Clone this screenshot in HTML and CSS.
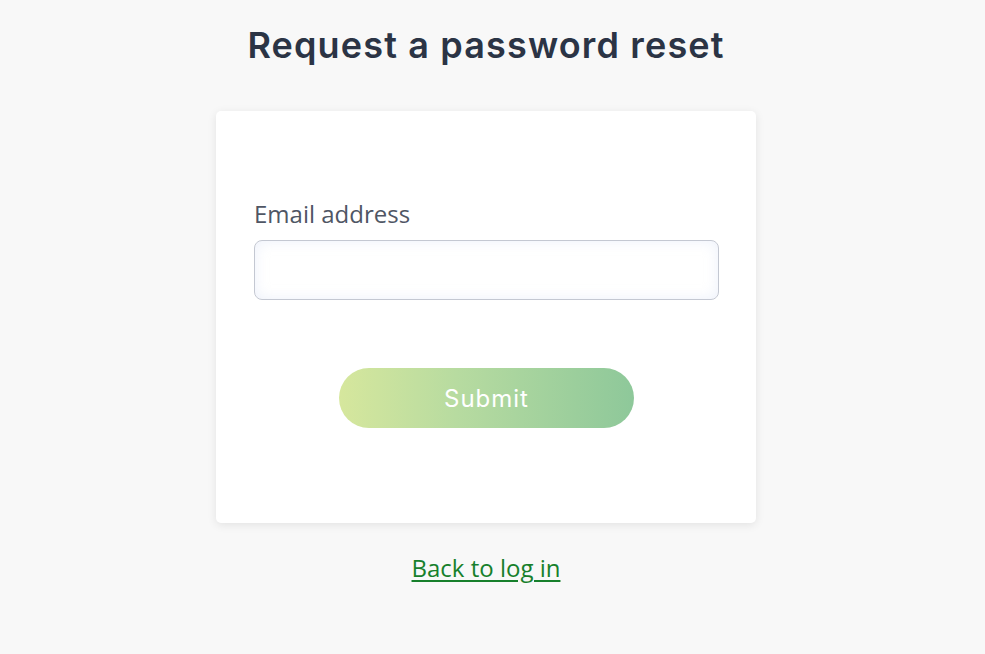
FILE: index.html
```html
<!DOCTYPE html>
<html lang="en">
<head>
<meta charset="utf-8">
<title>Request a password reset</title>
<link rel="stylesheet" href="styles.css">
</head>
<body>
<main class="page">
  <h1 class="title">Request a password reset</h1>
  <form class="card">
    <label class="label" for="email">Email address</label>
    <input class="input" id="email" type="email">
    <div class="actions">
      <button class="submit" type="button">Submit</button>
    </div>
  </form>
  <a class="back" href="#">Back to log in</a>
</main>
</body>
</html>
```
FILE: styles.css
```css
html, body {
  margin: 0;
  padding: 0;
  background: #f8f8f8;
}
body {
  padding-right: 13px;
  font-family: "Open Sans", "Liberation Sans", sans-serif;
}
.page {
  display: flex;
  flex-direction: column;
  align-items: center;
}
.title {
  margin: 24px 0 44px;
  font-family: Inter, "Liberation Sans", sans-serif;
  font-weight: 600;
  font-size: 36px;
  line-height: 1.2;
  letter-spacing: 1.15px;
  color: #2b3445;
}
.card {
  box-sizing: border-box;
  width: 540px;
  height: 412px;
  padding: 85px 37px 0 38px;
  background: #ffffff;
  border-radius: 5px;
  box-shadow: 0 2px 10px rgba(0, 0, 0, 0.09);
  display: flex;
  flex-direction: column;
  margin: 0;
}
.label {
  font-size: 24px;
  line-height: 36px;
  color: #4f5664;
}
.input {
  box-sizing: border-box;
  margin: 8px 0 0;
  height: 60px;
  width: 100%;
  border: 1px solid #c4c8d2;
  border-radius: 8px;
  background: #ffffff;
  box-shadow: inset 0 0 14px rgba(200, 212, 240, 0.35);
  outline: none;
}
.actions {
  display: flex;
  justify-content: center;
  margin-top: 68px;
}
.submit {
  width: 295px;
  height: 60px;
  border: none;
  border-radius: 30px;
  background: linear-gradient(90deg, #d6e79d 0%, #b7dba0 40%, #8ec89a 100%);
  color: #ffffff;
  font-family: Inter, "Liberation Sans", sans-serif;
  font-weight: 400;
  font-size: 24px;
  letter-spacing: 1px;
  cursor: pointer;
}
.back {
  margin-top: 27px;
  font-size: 24px;
  line-height: 36px;
  color: #17802c;
  text-decoration: underline;
  text-underline-offset: 3px;
}
```
